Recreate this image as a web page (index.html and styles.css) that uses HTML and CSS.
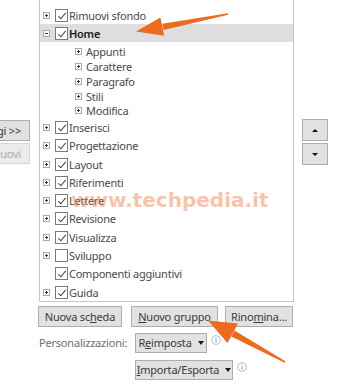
FILE: index.html
```html
<!DOCTYPE html>
<html lang="it">
<head>
<meta charset="utf-8">
<title>Personalizza barra multifunzione</title>
<link rel="stylesheet" href="styles.css">
</head>
<body>
<div class="page">
  <div class="main">
    <div class="side-left">
      <button class="btn side-btn">Aggiungi &gt;&gt;</button>
      <button class="btn side-btn disabled">&lt;&lt; Rimuovi</button>
    </div>
    <div class="tree">
      <div class="row"><span class="exp"></span><span class="cb on"></span><span class="lbl">Rimuovi sfondo</span></div>
      <div class="row selected"><span class="exp open"></span><span class="cb on"></span><span class="lbl">Home</span></div>
      <div class="group">
        <div class="sub"><span class="exp"></span><span class="lbl">Appunti</span></div>
        <div class="sub"><span class="exp"></span><span class="lbl">Carattere</span></div>
        <div class="sub"><span class="exp"></span><span class="lbl">Paragrafo</span></div>
        <div class="sub"><span class="exp"></span><span class="lbl">Stili</span></div>
        <div class="sub"><span class="exp"></span><span class="lbl">Modifica</span></div>
      </div>
      <div class="row"><span class="exp"></span><span class="cb on"></span><span class="lbl">Inserisci</span></div>
      <div class="row"><span class="exp"></span><span class="cb on"></span><span class="lbl">Progettazione</span></div>
      <div class="row"><span class="exp"></span><span class="cb on"></span><span class="lbl">Layout</span></div>
      <div class="row"><span class="exp"></span><span class="cb on"></span><span class="lbl">Riferimenti</span></div>
      <div class="row"><span class="exp"></span><span class="cb on"></span><span class="lbl">Lettere</span></div>
      <div class="row"><span class="exp"></span><span class="cb on"></span><span class="lbl">Revisione</span></div>
      <div class="row"><span class="exp"></span><span class="cb on"></span><span class="lbl">Visualizza</span></div>
      <div class="row"><span class="exp"></span><span class="cb"></span><span class="lbl">Sviluppo</span></div>
      <div class="row"><span class="exp none"></span><span class="cb on"></span><span class="lbl">Componenti aggiuntivi</span></div>
      <div class="row"><span class="exp"></span><span class="cb on"></span><span class="lbl">Guida</span></div>
    </div>
    <div class="side-right">
      <button class="btn move"><span class="tri up"></span></button>
      <button class="btn move"><span class="tri down"></span></button>
    </div>
  </div>

  <div class="actions">
    <button class="btn act w-scheda">Nuova sc<u>h</u>eda</button>
    <button class="btn act w-gruppo"><u>N</u>uovo gruppo</button>
    <button class="btn act w-rinomina">Rino<u>m</u>ina...</button>
  </div>

  <div class="custom">
    <span class="custom-label">Personalizzazioni:</span>
    <div class="custom-buttons">
      <div class="line">
        <button class="btn drop w-reimposta">R<u>e</u>imposta<span class="caret"></span></button>
        <svg class="info" viewBox="0 0 10 10" width="10" height="10"><circle cx="5" cy="5" r="4.3" fill="none" stroke="#9fb0cc" stroke-width="0.9"/><rect x="4.5" y="4.2" width="1" height="3.3" fill="#7d93ba"/><circle cx="5" cy="2.9" r="0.6" fill="#7d93ba"/></svg>
      </div>
      <div class="line">
        <button class="btn drop w-importa"><u>I</u>mporta/Esporta<span class="caret"></span></button>
        <svg class="info" viewBox="0 0 10 10" width="10" height="10"><circle cx="5" cy="5" r="4.3" fill="none" stroke="#9fb0cc" stroke-width="0.9"/><rect x="4.5" y="4.2" width="1" height="3.3" fill="#7d93ba"/><circle cx="5" cy="2.9" r="0.6" fill="#7d93ba"/></svg>
      </div>
    </div>
  </div>

  <div class="watermark">www.techpedia.it</div>

  <svg class="arrows" viewBox="0 0 338 389" width="338" height="389">
    <polygon points="163.6,30 162.4,23.8 227.9,13.3 228.2,14.7" fill="#ee6a1c"/>
    <polygon points="136,31.5 160.4,17.4 164.2,35.7" fill="#ee6a1c"/>
    <polygon points="234.5,330.6 231.3,336.6 284.6,362.7 285.4,361.3" fill="#ee6a1c"/>
    <polygon points="208,320.5 238,323.6 227.5,343" fill="#ee6a1c"/>
  </svg>
</div>
</body>
</html>
```

FILE: styles.css
```css
* { box-sizing: border-box; }

html, body {
  margin: 0;
  padding: 0;
}

body {
  width: 338px;
  height: 389px;
  overflow: hidden;
  background: #ffffff;
  font-family: "Noto Sans", "Open Sans", sans-serif;
  font-size: 11px;
  color: #4a4a4a;
}

.page {
  position: relative;
  width: 338px;
  height: 389px;
}

/* ---------- buttons ---------- */
.btn {
  font-family: inherit;
  font-size: 11px;
  letter-spacing: -0.2px;
  color: #3a3a3a;
  background: #e1e1e1;
  border: 1px solid #adadad;
  border-radius: 0;
  margin: 0;
  padding: 0;
  height: 21px;
  line-height: 19px;
  white-space: nowrap;
  display: flex;
  align-items: center;
  justify-content: center;
}

.btn u {
  text-decoration: underline;
  text-underline-offset: 1px;
}

/* ---------- main area ---------- */
.main {
  display: flex;
  height: 302px;
}

.side-left {
  width: 39px;
  flex: none;
  overflow: hidden;
  display: flex;
  flex-direction: column;
  align-items: flex-end;
  padding-top: 120px;
  padding-right: 9px;
  gap: 2px;
}

.side-btn {
  padding: 0 8px;
  height: 21px;
}

.side-btn.disabled {
  color: #adadad;
  background: #ebebeb;
  border-color: #d6d6d6;
}

.tree {
  width: 255px;
  flex: none;
  border: 1px solid #c6c6c6;
  border-top: none;
  padding: 6px 0 1px;
}

.row {
  display: flex;
  align-items: center;
  height: 18.3px;
  padding-left: 3px;
}

.row.selected {
  height: 18px;
  background: #dedede;
}

.row.selected .lbl {
  color: #1a1a1a;
  font-weight: 600;
}

.group {
  padding-top: 2px;
}

.sub {
  display: flex;
  align-items: center;
  height: 14.8px;
  padding-left: 35px;
}

.lbl {
  white-space: nowrap;
  line-height: 1;
  letter-spacing: -0.25px;
}

.exp {
  position: relative;
  width: 7px;
  height: 7px;
  border: 1px solid #a8a8a8;
  background: #ffffff;
  margin-right: 5px;
  flex: none;
}

.sub .exp {
  margin-right: 4px;
}

.exp::before {
  content: "";
  position: absolute;
  left: 1px;
  top: 2px;
  width: 3px;
  height: 1px;
  background: #333333;
}

.exp::after {
  content: "";
  position: absolute;
  left: 2px;
  top: 1px;
  width: 1px;
  height: 3px;
  background: #333333;
}

.exp.open::after { display: none; }

.exp.none {
  border-color: transparent;
  background: transparent;
}
.exp.none::before,
.exp.none::after { display: none; }

.cb {
  position: relative;
  width: 13px;
  height: 13px;
  border: 1px solid #7a7a7a;
  background: #ffffff;
  margin-right: 1px;
  flex: none;
}

.cb.on::after {
  content: "";
  position: absolute;
  left: 3.5px;
  top: 1px;
  width: 3px;
  height: 7px;
  border: solid #444444;
  border-width: 0 1.1px 1.1px 0;
  transform: rotate(40deg);
}

.side-right {
  flex: 1;
  display: flex;
  flex-direction: column;
  align-items: flex-start;
  padding-top: 119px;
  padding-left: 8px;
  gap: 2px;
}

.move {
  width: 26px;
  height: 22px;
}

.tri {
  width: 0;
  height: 0;
  border-left: 3px solid transparent;
  border-right: 3px solid transparent;
}
.tri.up { border-bottom: 3px solid #111111; }
.tri.down { border-top: 3px solid #111111; }

/* ---------- actions ---------- */
.actions {
  display: flex;
  padding-left: 38px;
  margin-top: 4px;
}

.w-scheda { width: 84px; }
.w-gruppo { width: 87px; margin-left: 9px; }
.w-rinomina { width: 68px; margin-left: 7px; }

/* ---------- customizations ---------- */
.custom {
  display: flex;
  padding-left: 39px;
  margin-top: 6px;
}

.custom-label {
  width: 96px;
  flex: none;
  height: 20px;
  line-height: 20px;
  color: #6e6e6e;
  letter-spacing: -0.2px;
}

.custom-buttons {
  display: flex;
  flex-direction: column;
  gap: 7px;
}

.line {
  display: flex;
  align-items: center;
}

.drop {
  height: 20px;
  line-height: 18px;
}

.w-reimposta { width: 72px; }
.w-importa { width: 98px; }

.caret {
  width: 0;
  height: 0;
  margin-left: 6px;
  border-left: 3.5px solid transparent;
  border-right: 3.5px solid transparent;
  border-top: 4px solid #1a1a1a;
}

.info {
  margin-left: 4px;
  margin-top: -6px;
}

/* ---------- overlays ---------- */
.watermark {
  position: absolute;
  left: 71px;
  top: 188px;
  font-family: "DejaVu Sans", sans-serif;
  font-weight: bold;
  font-size: 20px;
  color: rgba(240, 120, 60, 0.45);
  white-space: nowrap;
  pointer-events: none;
}

.arrows {
  position: absolute;
  left: 0;
  top: 0;
  pointer-events: none;
}
```
